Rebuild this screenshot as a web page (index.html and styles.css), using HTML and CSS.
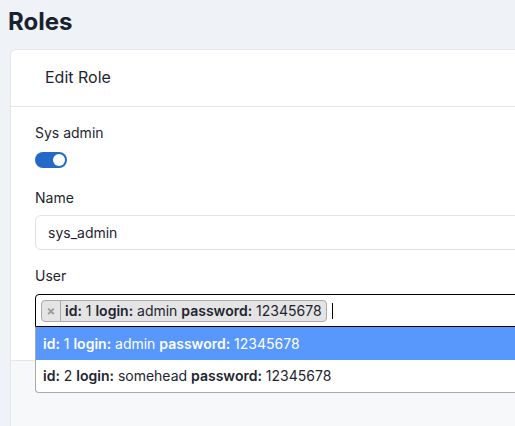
FILE: index.html
```html
<!DOCTYPE html>
<html>
<head>
<meta charset="utf-8">
<link rel="stylesheet" href="styles.css">
</head>
<body>
<h1 class="page-title">Roles</h1>
<div class="card">
  <div class="card-header">Edit Role</div>
  <div class="card-body">
    <div class="field field-switch">
      <label class="label">Sys admin</label>
      <span class="switch"><span class="knob"></span></span>
    </div>
    <div class="field field-name">
      <label class="label label-name">Name</label>
      <div class="input">sys_admin</div>
    </div>
    <div class="field">
      <label class="label label-user">User</label>
      <div class="select-wrap">
        <div class="select">
          <span class="tag"><span class="tag-x">×</span><span class="tag-text"><b>id:</b> 1 <b>login:</b> admin <b>password:</b> 12345678</span></span>
          <span class="caret"></span>
        </div>
        <ul class="dropdown">
          <li class="option active"><b>id:</b> 1 <b>login:</b> admin <b>password:</b> 12345678</li>
          <li class="option"><b>id:</b> 2 <b>login:</b> somehead <b>password:</b> 12345678</li>
        </ul>
      </div>
    </div>
  </div>
  <div class="card-footer"></div>
</div>
</body>
</html>
```
FILE: styles.css
```css
html { overflow: hidden; }
body {
  margin: 0;
  padding: 8px 0 0 8px;
  background: #eff3f8;
  font-family: "Inter", "Open Sans", sans-serif;
  color: #1e2530;
}
.page-title {
  margin: 0;
  font-size: 24px;
  font-weight: 700;
  line-height: 28px;
  color: #1a2230;
}
.card {
  margin: 13px 0 0 2px;
  width: 560px;
  background: #fff;
  border: 1px solid #e3e6ea;
  border-radius: 6px;
}
.card-header {
  padding: 17px 34px 18px;
  font-size: 16px;
  line-height: 21px;
  border-bottom: 1px solid #e3e6ea;
}
.card-body {
  padding: 15px 24px 33px;
}
.field-switch { margin-bottom: 19px; }
.field-name { margin-bottom: 15px; }
.label {
  display: block;
  font-size: 14px;
  line-height: 21px;
  margin-bottom: 9px;
}
.label-name { margin-bottom: 7px; }
.label-user { margin-bottom: 8px; }
.switch {
  display: block;
  width: 32px;
  height: 16px;
  border-radius: 8px;
  background: #2568c7;
  position: relative;
}
.knob {
  position: absolute;
  right: 2px;
  top: 2px;
  width: 12px;
  height: 12px;
  border-radius: 50%;
  background: #fff;
}
.input {
  height: 35px;
  box-sizing: border-box;
  border: 1px solid #dfe3e8;
  border-radius: 6px;
  padding: 0 12px;
  font-size: 14px;
  line-height: 33px;
}
.select-wrap { position: relative; }
.select {
  height: 33px;
  box-sizing: border-box;
  border: 1px solid #000;
  border-radius: 4px 4px 0 0;
  display: flex;
  align-items: center;
  padding: 0 5px;
  gap: 5px;
  font-size: 14px;
}
.tag {
  display: flex;
  align-items: stretch;
  height: 22px;
  box-sizing: border-box;
  background: #e4e4e4;
  border: 1px solid #aaa;
  border-radius: 4px;
}
.tag-x {
  width: 18px;
  border-right: 1px solid #aaa;
  color: #999;
  font-weight: 700;
  font-size: 13px;
  display: flex;
  align-items: center;
  justify-content: center;
}
.tag-text {
  padding: 0 4px;
  line-height: 20px;
}
.caret {
  width: 1px;
  height: 16px;
  background: #000;
}
.dropdown {
  position: absolute;
  left: 0;
  top: 33px;
  width: 100%;
  margin: 0;
  padding: 0;
  list-style: none;
  background: #fff;
  border: 1px solid #aaa;
  border-top: none;
  border-radius: 0 0 4px 4px;
  box-sizing: border-box;
  z-index: 2;
}
.option {
  height: 33px;
  line-height: 33px;
  padding: 0 7px;
  font-size: 14px;
}
.option + .option {
  height: 32px;
  line-height: 32px;
}
.option.active {
  background: #5897fb;
  color: #fff;
}
b { font-weight: 600; }
.card-footer {
  height: 80px;
  background: #f7f8fa;
  border-top: 1px solid #e3e6ea;
}
```
